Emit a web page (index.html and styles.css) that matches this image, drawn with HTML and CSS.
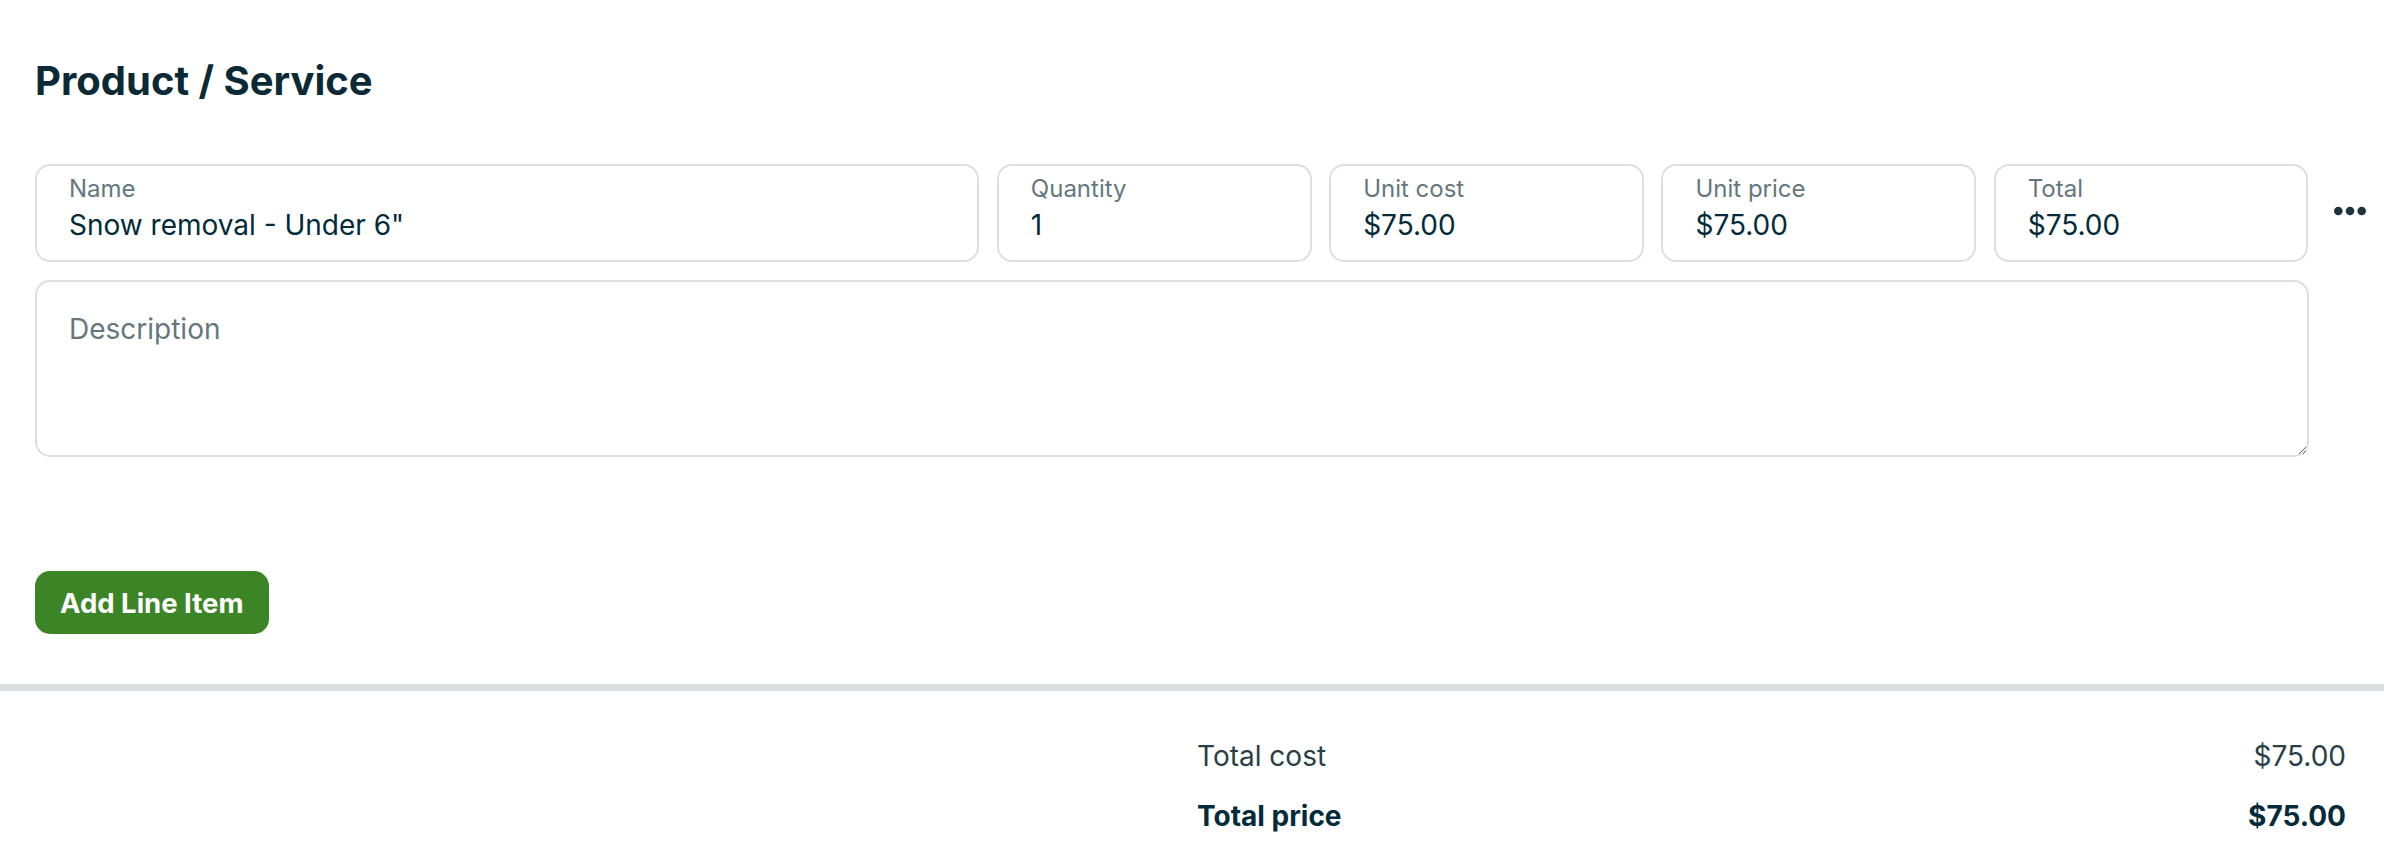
FILE: index.html
```html
<!DOCTYPE html>
<html lang="en">
<head>
  <meta charset="UTF-8">
  <title>Product / Service</title>
  <link rel="stylesheet" href="styles.css">
</head>
<body>

  <section class="line-items">
    <h1 class="section-title">Product / Service</h1>

    <div class="line-item">
      <div class="line-item-fields">
        <div class="field-row">
          <label class="field">
            <span class="field-label">Name</span>
            <span class="field-value">Snow removal - Under 6"</span>
          </label>
          <label class="field">
            <span class="field-label">Quantity</span>
            <span class="field-value">1</span>
          </label>
          <label class="field">
            <span class="field-label">Unit cost</span>
            <span class="field-value">$75.00</span>
          </label>
          <label class="field">
            <span class="field-label">Unit price</span>
            <span class="field-value">$75.00</span>
          </label>
          <label class="field">
            <span class="field-label">Total</span>
            <span class="field-value">$75.00</span>
          </label>
        </div>
        <textarea class="description" placeholder="Description"></textarea>
      </div>

      <div class="line-item-actions">
        <button class="more-btn" aria-label="More actions">
          <svg width="32" height="10" viewBox="0 0 32 10">
            <circle cx="4.3" cy="5" r="4.3" />
            <circle cx="16" cy="5" r="4.3" />
            <circle cx="27.7" cy="5" r="4.3" />
          </svg>
        </button>
      </div>
    </div>

    <button class="btn-add">Add Line Item</button>
  </section>

  <div class="divider"></div>

  <section class="summary">
    <div class="summary-table">
      <div class="summary-row">
        <span>Total cost</span>
        <span>$75.00</span>
      </div>
      <div class="summary-row total">
        <span>Total price</span>
        <span>$75.00</span>
      </div>
    </div>
  </section>

</body>
</html>
```

FILE: styles.css
```css
body {
  font-family: Inter, 'Noto Sans', sans-serif;
  background: #fff;
  color: #032b3a;
  margin: 0;
}

.line-items {
  padding: 57px 10px 50px 35px;
}

.section-title {
  font-size: 40px;
  font-weight: 700;
  line-height: 48px;
  color: #0b2a36;
  margin: 0 0 59px;
}

.line-item {
  display: flex;
  gap: 17.5px;
}

.line-item-fields {
  flex: 1;
  display: flex;
  flex-direction: column;
  gap: 18px;
}

.field-row {
  display: grid;
  grid-template-columns: 3fr repeat(4, 1fr);
  gap: 17.5px;
}

.field {
  display: flex;
  flex-direction: column;
  gap: 5px;
  padding: 9px 32px 18px;
  border: 2px solid #dcdfe1;
  border-radius: 15px;
  box-sizing: border-box;
  height: 98px;
}

.field-label {
  font-size: 24px;
  line-height: 28px;
  color: #65777e;
}

.field-value {
  font-size: 28px;
  line-height: 34px;
  color: #032b3a;
}

.description {
  display: block;
  height: 177px;
  box-sizing: border-box;
  padding: 30px 32px;
  border: 2px solid #dcdfe1;
  border-radius: 15px;
  font-family: inherit;
  font-size: 28px;
  line-height: 34px;
  color: #032b3a;
  outline: none;
}

.description::placeholder {
  color: #65777e;
}

.line-item-actions {
  width: 48px;
  height: 98px;
  display: flex;
  align-items: center;
  justify-content: center;
  padding-bottom: 5px;
  box-sizing: border-box;
}

.more-btn {
  background: none;
  border: 0;
  padding: 0;
  display: flex;
  cursor: pointer;
}

.more-btn circle {
  fill: #1d3440;
}

.btn-add {
  margin-top: 114px;
  height: 63px;
  padding: 0 25px;
  background: #3c8527;
  color: #fff;
  border: 0;
  border-radius: 15px;
  font-family: inherit;
  font-size: 27.5px;
  font-weight: 700;
  cursor: pointer;
}

.divider {
  height: 7px;
  background: #dadee0;
}

.summary {
  display: flex;
  justify-content: flex-end;
  padding: 47px 38px 40px 0;
}

.summary-table {
  width: 1149px;
  display: flex;
  flex-direction: column;
  gap: 24px;
}

.summary-row {
  display: flex;
  justify-content: space-between;
  font-size: 28px;
  line-height: 36px;
  color: #2a3f47;
}

.summary-row.total {
  font-weight: 700;
  color: #032b3a;
}
```
